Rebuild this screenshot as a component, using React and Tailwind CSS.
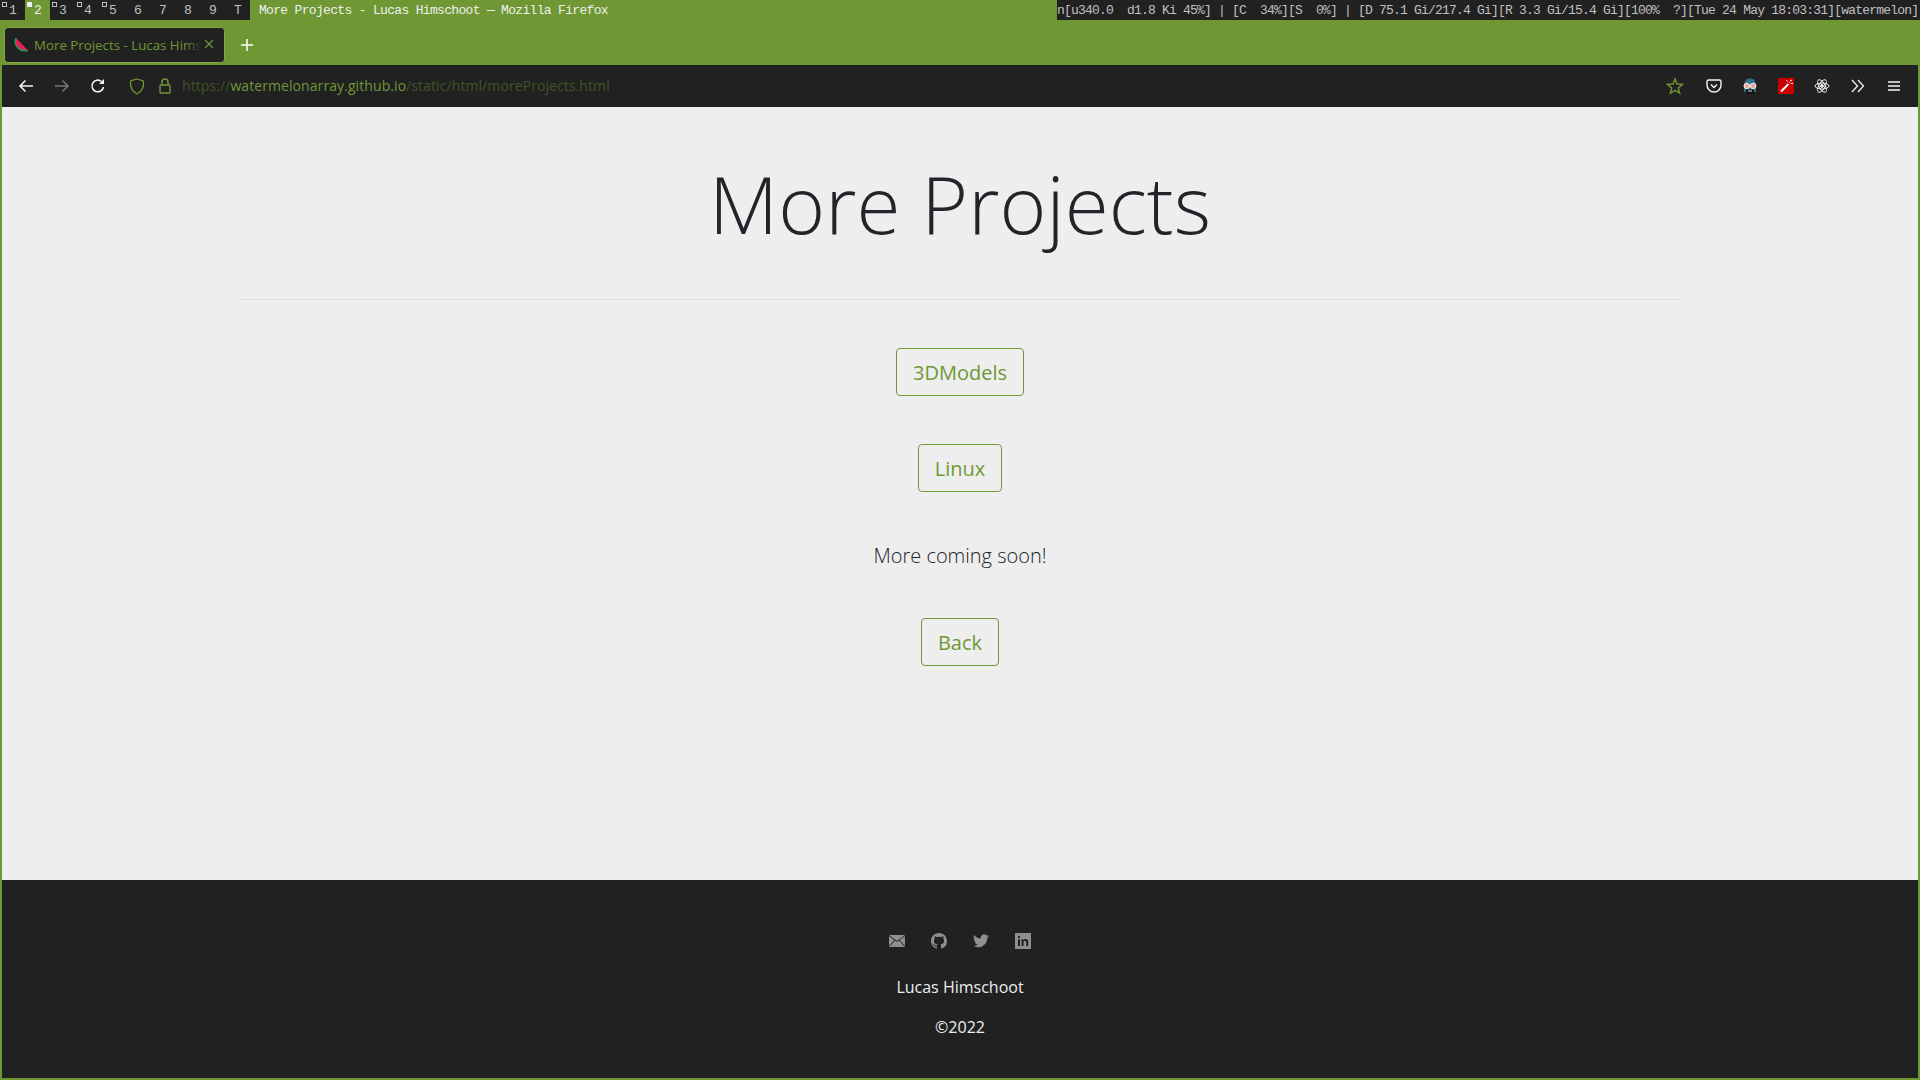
import React from "react";

const mono = "font-['Liberation_Mono',monospace]";
const sans = "font-['Open_Sans',sans-serif]";

function Ws({ n, dot, active }) {
  return (
    <div className={`relative w-[25px] h-5 flex items-center justify-center text-[13px] pt-[2px] ${active ? "bg-[#6f9834] text-[#eeeeee]" : "text-[#c0c0c0]"}`}>
      {dot && <span className={`absolute left-[2px] top-[2px] w-[5px] h-[5px] ${active ? "bg-[#eeeeee]" : "border border-[#c0c0c0]"}`} />}
      <span className="pl-[1px]">{n}</span>
    </div>
  );
}

function Btn({ children, w }) {
  return (
    <a className={`${w} h-12 pt-[1px] flex items-center justify-center border border-[#6f9834] rounded-[4px] text-[#6f9834] text-[20px]`}>{children}</a>
  );
}

export default function App() {
  return (
    <div className={`w-[1920px] h-[1080px] overflow-hidden flex flex-col bg-[#6f9834] ${sans}`}>
      {/* i3 bar */}
      <div className={`h-5 flex shrink-0 ${mono}`}>
        <div className="flex bg-[#212121] w-[250px]">
          <Ws n="1" dot />
          <Ws n="2" dot active />
          <Ws n="3" dot />
          <Ws n="4" dot />
          <Ws n="5" dot />
          <Ws n="6" />
          <Ws n="7" />
          <Ws n="8" />
          <Ws n="9" />
          <Ws n="T" />
        </div>
        <div className="pl-[9px] flex-1 text-[13px] leading-[21px] tracking-[-0.68px] text-[#eeeeee] whitespace-pre">More Projects - Lucas Himschoot — Mozilla Firefox</div>
        <div className="w-[863px] h-5 bg-[#212121] text-[#c0c0c0] text-[13px] leading-[21px] tracking-[-0.8px] whitespace-pre">n[u340.0  d1.8 Ki 45%] | [C  34%][S  0%] | [D 75.1 Gi/217.4 Gi][R 3.3 Gi/15.4 Gi][100%  ?][Tue 24 May 18:03:31][watermelon]</div>
      </div>

      {/* Tabs */}
      <div className="h-[45px] shrink-0 flex items-center pl-[4px] pt-[4px]">
        <div className="w-[221px] h-[36px] bg-[#212121] rounded-[4px] border border-[#7fa544] flex items-center pl-[8px] relative">
          <svg width="16" height="16" viewBox="0 0 16 16" className="shrink-0">
            <path d="M3 1 C0 8 6 15 15 13.5 Z" fill="#ee1c5c" />
            <path d="M3 1 C0 8 6 15 15 13.5" fill="none" stroke="#1f9d55" strokeWidth="1.4" />
          </svg>
          <span className="ml-[5px] text-[13.3px] leading-[20px] whitespace-nowrap text-[#6f9834]">More Projects - Lucas Hims</span>
          <span className="absolute left-[180px] top-[6px] w-[18px] h-[22px] bg-gradient-to-r from-transparent to-[#212121]" />
          <span className="absolute right-[9px] top-[10px]">
            <svg width="12" height="12" viewBox="0 0 12 12" stroke="#6f9834" strokeWidth="1.1"><path d="M2 2 L10 10 M10 2 L2 10" /></svg>
          </span>
        </div>
        <svg width="14" height="14" viewBox="0 0 14 14" stroke="#ffffff" strokeWidth="1.5" className="ml-[15px]"><path d="M7 1 V13 M1 7 H13" /></svg>
      </div>

      {/* Window with side borders */}
      <div className="flex-1 mx-[2px] mb-[2px] flex flex-col min-h-0">
        {/* Nav bar */}
        <div className="h-[42px] shrink-0 bg-[#212121] flex items-center relative">
          <svg width="16" height="16" viewBox="0 0 16 16" fill="none" stroke="#f5f5f5" strokeWidth="1.5" className="ml-[16px]"><path d="M15 8 H2 M7.5 2.5 L2 8 L7.5 13.5" /></svg>
          <svg width="16" height="16" viewBox="0 0 16 16" fill="none" stroke="#777777" strokeWidth="1.5" className="ml-[20px]"><path d="M1 8 H14 M8.5 2.5 L14 8 L8.5 13.5" /></svg>
          <svg width="16" height="16" viewBox="0 0 16 16" fill="none" stroke="#f5f5f5" strokeWidth="1.6" className="ml-[20px]"><path d="M13.5 9 A5.8 5.8 0 1 1 11.5 3.5" /><path d="M14 1 V6 H9 Z" fill="#f5f5f5" stroke="none" /></svg>
          <svg width="16" height="17" viewBox="0 0 16 17" fill="none" stroke="#6f9834" strokeWidth="1.3" className="ml-[23px]"><path d="M8 1 L14.5 3 C15 9 13 13.5 8 16 C3 13.5 1 9 1.5 3 Z" /></svg>
          <svg width="14" height="16" viewBox="0 0 14 16" fill="none" stroke="#6f9834" strokeWidth="1.4" className="ml-[13px]"><rect x="2" y="7" width="10" height="8" rx="1" /><path d="M4 7 V4 A3 3 0 0 1 10 4 V7" /></svg>
          <div className="ml-[10px] mb-[2px] text-[14px] tracking-[0.08px] whitespace-nowrap text-[#3f5426]">
            https://<span className="text-[#6f9834]">watermelonarray.github.io</span>/static/html/moreProjects.html
          </div>
          <div className="ml-auto mr-[6px] flex items-center">
            <svg width="18" height="18" viewBox="0 0 18 18" fill="none" stroke="#6f9834" strokeWidth="1.4"><path d="M9 2 L11 7 L16.5 7.4 L12.3 11 L13.7 16.3 L9 13.4 L4.3 16.3 L5.7 11 L1.5 7.4 L7 7 Z" /></svg>
            <svg width="16" height="16" viewBox="0 0 16 16" fill="none" stroke="#f5f5f5" strokeWidth="1.4" className="ml-[22px]"><path d="M2.5 2 H13.5 Q15 2 15 3.5 V7 A7 7 0 0 1 1 7 V3.5 Q1 2 2.5 2 Z" /><path d="M5 6.5 L8 9.5 L11 6.5" /></svg>
            <svg width="16" height="16" viewBox="0 0 16 16" className="ml-[20px]">
              <path d="M2 9 C2 3 4 0.5 8 0.5 C12 0.5 14 3 14 9 V14 H2 Z" fill="#2e6f8a" />
              <circle cx="4.8" cy="8" r="2.8" fill="#e9a99a" stroke="#eeeeee" />
              <circle cx="11.2" cy="8" r="2.8" fill="#e9a99a" stroke="#eeeeee" />
              <rect x="4" y="11.5" width="8" height="4" fill="#111111" />
              <path d="M6 13 H10" stroke="#dddddd" />
            </svg>
            <div className="ml-[20px] w-4 h-4 bg-[#cc0000] flex items-center justify-center">
              <svg width="16" height="16" viewBox="0 0 16 16"><path d="M3 13.5 L10.5 6" stroke="#ffffff" strokeWidth="2" /><path d="M12 3 L14 2 M13 5.5 L15 5.5 M8.5 2 L9.5 3.5 M11 5 L12 4" stroke="#ffffff" strokeWidth="1" /></svg>
            </div>
            <svg width="16" height="16" viewBox="0 0 16 16" fill="none" stroke="#f0f0f0" strokeWidth="1" className="ml-[20px]">
              <ellipse cx="8" cy="8" rx="7" ry="3" />
              <ellipse cx="8" cy="8" rx="7" ry="3" transform="rotate(60 8 8)" />
              <ellipse cx="8" cy="8" rx="7" ry="3" transform="rotate(120 8 8)" />
              <circle cx="8" cy="8" r="1.4" fill="#f0f0f0" />
            </svg>
            <svg width="14" height="14" viewBox="0 0 14 14" fill="none" stroke="#f0f0f0" strokeWidth="1.3" className="ml-[21px]"><path d="M1 1 L6.5 7 L1 13 M7 1 L12.5 7 L7 13" /></svg>
            <svg width="12" height="10" viewBox="0 0 12 10" fill="none" stroke="#f5f5f5" strokeWidth="1.3" className="ml-[23px] mr-[12px]"><path d="M0 1 H12 M0 5 H12 M0 9 H12" /></svg>
          </div>
        </div>

        {/* Content */}
        <div className="flex-1 bg-[#eeeeee] flex flex-col items-center">
          <h1 className="mt-[48px] text-[80px] leading-[96px] font-[320] tracking-[0.1px] text-[#212529]">More Projects</h1>
          <div className="mt-[48px] ml-[2px] w-[1438px] h-px bg-[#dddddd]" />
          <div className="mt-[48px]"><Btn w="w-[128px]">3DModels</Btn></div>
          <div className="mt-[48px]"><Btn w="w-[84px]">Linux</Btn></div>
          <p className="mt-[48px] pt-[1px] -mb-[1px] text-[20px] leading-[30px] font-[350] text-[#212529]">More coming soon!</p>
          <div className="mt-[48px]"><Btn w="w-[78px]">Back</Btn></div>
        </div>

        {/* Footer */}
        <div className="h-[198px] shrink-0 bg-[#212121] flex flex-col items-center">
          <div className="mt-[53px] flex items-center gap-[26px] h-4">
            <svg width="16" height="12" viewBox="0 0 16 12"><rect width="16" height="12" fill="#8f8f8f" /><path d="M0 0.5 L8 6.5 L16 0.5 M0 11.5 L6 5 M16 11.5 L10 5" fill="none" stroke="#212121" strokeWidth="1" /></svg>
            <svg width="16" height="16" viewBox="0 0 16 16" fill="#8f8f8f"><path d="M8 0C3.58 0 0 3.58 0 8c0 3.54 2.29 6.53 5.47 7.59.4.07.55-.17.55-.38 0-.19-.01-.82-.01-1.49-2.01.37-2.53-.49-2.69-.94-.09-.23-.48-.94-.82-1.13-.28-.15-.68-.52-.01-.53.63-.01 1.08.58 1.23.82.72 1.21 1.87.87 2.33.66.07-.52.28-.87.51-1.07-1.78-.2-3.64-.89-3.64-3.95 0-.87.31-1.59.82-2.15-.08-.2-.36-1.02.08-2.12 0 0 .67-.21 2.2.82.64-.18 1.32-.27 2-.27s1.36.09 2 .27c1.53-1.04 2.2-.82 2.2-.82.44 1.1.16 1.92.08 2.12.51.56.82 1.27.82 2.15 0 3.07-1.87 3.75-3.65 3.95.29.25.54.73.54 1.48 0 1.07-.01 1.93-.01 2.2 0 .21.15.46.55.38A8.01 8.01 0 0 0 16 8c0-4.42-3.58-8-8-8z" /></svg>
            <svg width="16" height="14" viewBox="0 0 24 20" fill="#8f8f8f"><path d="M24 2.4a9.8 9.8 0 0 1-2.8.8A4.9 4.9 0 0 0 23.3.5a9.8 9.8 0 0 1-3.1 1.2 4.9 4.9 0 0 0-8.4 4.5A14 14 0 0 1 1.7.9a4.9 4.9 0 0 0 1.5 6.6 4.9 4.9 0 0 1-2.2-.6c0 2.4 1.7 4.4 3.9 4.9a4.9 4.9 0 0 1-2.2.1 4.9 4.9 0 0 0 4.6 3.4A9.9 9.9 0 0 1 0 17.3 14 14 0 0 0 7.5 19.5c9.1 0 14.3-7.7 14-14.6A10 10 0 0 0 24 2.4z" /></svg>
            <svg width="16" height="16" viewBox="0 0 16 16"><rect width="16" height="16" fill="#8f8f8f" /><path d="M3 6.2 H5 V13 H3 Z M3 3 H5 V5 H3 Z M6.5 6.2 H8.4 V7.2 C9 6.3 9.9 6 10.8 6 C12.6 6 13.2 7.2 13.2 9 V13 H11.2 V9.5 C11.2 8.5 10.9 7.8 10 7.8 C9 7.8 8.5 8.5 8.5 9.6 V13 H6.5 Z" fill="#212121" /></svg>
          </div>
          <div className="mt-[26px] text-[16px] leading-[24px] text-[#eeeeee]">Lucas Himschoot</div>
          <div className="mt-[16px] text-[16px] leading-[24px] text-[#eeeeee]">©2022</div>
        </div>
      </div>
    </div>
  );
}
